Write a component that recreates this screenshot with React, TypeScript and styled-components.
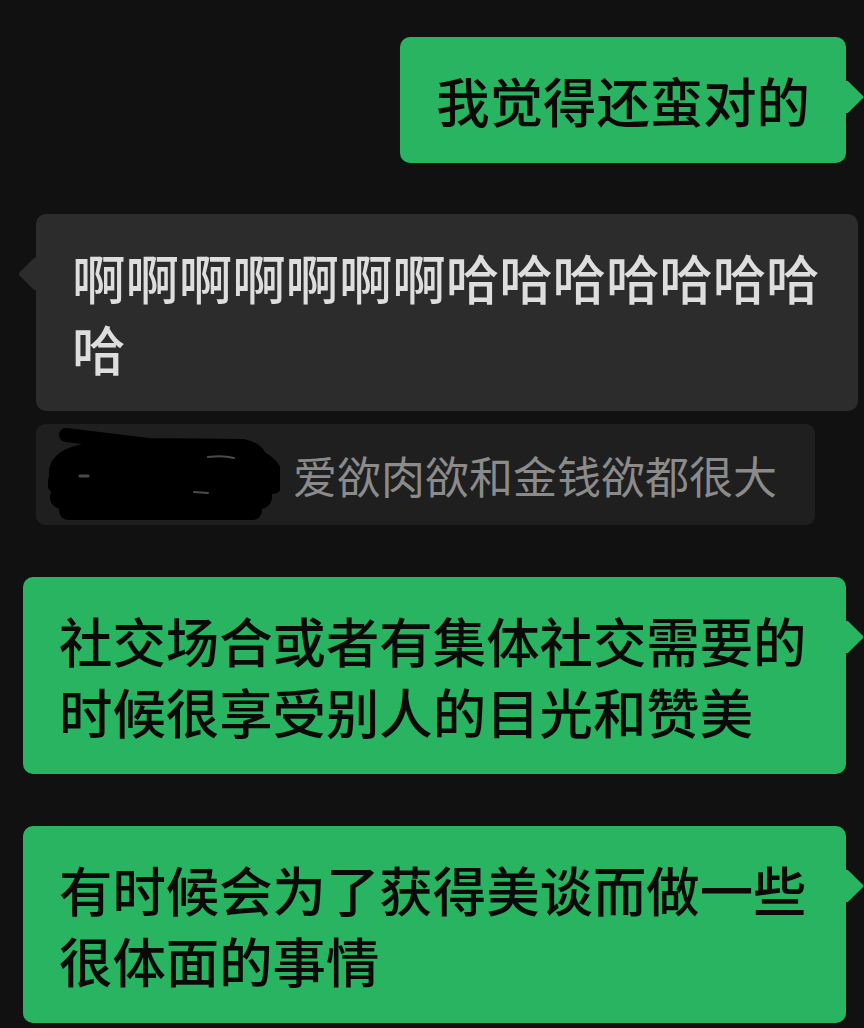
import styled, { createGlobalStyle } from "styled-components";

const GlobalStyle = createGlobalStyle`
  html, body {
    margin: 0;
    padding: 0;
    background: #111111;
  }
  body {
    font-family: "Noto Sans CJK SC", "Noto Sans", sans-serif;
  }
`;

const Chat = styled.div`
  width: 864px;
  min-height: 1028px;
  box-sizing: border-box;
  padding-top: 37px;
  display: flex;
  flex-direction: column;
  overflow: hidden;
`;

// 말풍선 한 줄: 보낸 사람 기준으로 좌/우 정렬
const Row = styled.div<{ mine: boolean; gap: number }>`
  display: flex;
  justify-content: ${(props) => (props.mine ? "flex-end" : "flex-start")};
  padding: ${(props) => (props.mine ? "0 18px 0 0" : "0 0 0 36px")};
  margin-bottom: ${(props) => props.gap}px;
`;

const Bubble = styled.div<{ mine: boolean }>`
  position: relative;
  box-sizing: border-box;
  max-width: ${(props) => (props.mine ? "823px" : "822px")};
  padding: 27px 36px 28px;
  border-radius: 10px;
  background: ${(props) => (props.mine ? "#29b461" : "#2c2c2c")};
  color: ${(props) => (props.mine ? "#0a0a0a" : "#dedede")};
  font-size: 53.4px;
  line-height: 71px;
  font-weight: 500;
  word-break: break-all;

  /* 꼬리 */
  &::after {
    content: "";
    position: absolute;
    top: 48px;
    ${(props) => (props.mine ? "right: -13px;" : "left: -13px;")}
    width: 24px;
    height: 24px;
    border-radius: 2px;
    background: inherit;
    transform: rotate(45deg);
  }
`;

const Quote = styled.div`
  display: flex;
  align-items: center;
  box-sizing: border-box;
  width: 779px;
  height: 101px;
  margin-left: 36px;
  margin-bottom: 52px;
  padding-left: 12px;
  border-radius: 9px;
  background: #1f1f1f;
`;

const QuoteText = styled.span`
  margin-left: 13px;
  color: #8b8b8b;
  font-size: 44px;
  line-height: 60px;
  white-space: nowrap;
`;

const Scribble = () => (
  <svg width="232" height="95" viewBox="0 0 232 95">
    <g stroke="#000" strokeLinecap="round" strokeLinejoin="round" fill="none">
      <path d="M18 8 L100 18 L195 19 Q214 23 212 37" strokeWidth="14" />
      <path d="M12 48 Q10 32 40 27 L200 29 Q226 40 224 53" strokeWidth="22" />
      <path d="M10 56 L224 56" strokeWidth="22" />
      <path d="M14 70 L212 70" strokeWidth="24" />
      <path d="M20 84 L205 84" strokeWidth="18" />
    </g>
    <rect x="22" y="26" width="185" height="60" fill="#000" />
    <g stroke="#4a4a4a" strokeLinecap="round" fill="none">
      <path d="M32 49 L40 49" strokeWidth="3" />
      <path d="M160 30 Q175 28 186 31" strokeWidth="2" />
      <path d="M146 65 L160 66" strokeWidth="2" />
    </g>
  </svg>
);

type Message = {
  mine: boolean;
  text: string;
  gap: number;
};

const messages: Message[] = [
  { mine: true, text: "我觉得还蛮对的", gap: 51 },
  { mine: false, text: "啊啊啊啊啊啊啊哈哈哈哈哈哈哈哈", gap: 13 },
];

const laterMessages: Message[] = [
  { mine: true, text: "社交场合或者有集体社交需要的时候很享受别人的目光和赞美", gap: 52 },
  { mine: true, text: "有时候会为了获得美谈而做一些很体面的事情", gap: 0 },
];

const App = () => {
  return (
    <>
      <GlobalStyle />
      <Chat>
        {messages.map((m, i) => (
          <Row key={i} mine={m.mine} gap={m.gap}>
            <Bubble mine={m.mine}>{m.text}</Bubble>
          </Row>
        ))}
        <Quote>
          <Scribble />
          <QuoteText>爱欲肉欲和金钱欲都很大</QuoteText>
        </Quote>
        {laterMessages.map((m, i) => (
          <Row key={i} mine={m.mine} gap={m.gap}>
            <Bubble mine={m.mine}>{m.text}</Bubble>
          </Row>
        ))}
      </Chat>
    </>
  );
};

export default App;
